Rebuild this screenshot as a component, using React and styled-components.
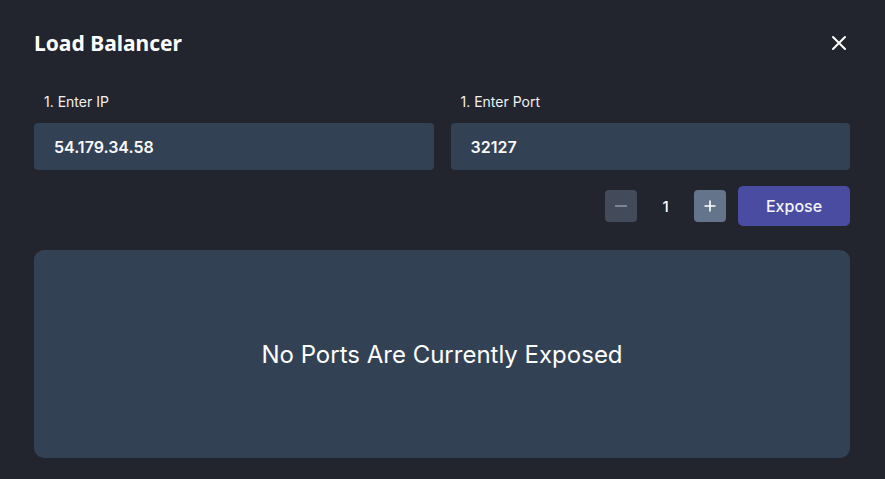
import React from 'react';
import styled, { createGlobalStyle } from 'styled-components';

const GlobalStyle = createGlobalStyle`
  html, body {
    margin: 0;
    padding: 0;
    background: #22242e;
  }
  * { box-sizing: border-box; }
`;

export default function App() {
  return (
    <>
      <GlobalStyle />
      <Modal>
        <Header>
          <Title>Load Balancer</Title>
          <CloseButton aria-label="Close">
            <svg width="16" height="16" viewBox="0 0 16 16">
              <path d="M2 2L14 14M14 2L2 14" stroke="#fff" strokeWidth="2" strokeLinecap="round" />
            </svg>
          </CloseButton>
        </Header>

        <Fields>
          <Field>
            <Label>1. Enter IP</Label>
            <Input defaultValue="54.179.34.58" />
          </Field>
          <Field>
            <Label>1. Enter Port</Label>
            <Input defaultValue="32127" />
          </Field>
        </Fields>

        <Controls>
          <StepButton $variant="minus">
            <svg width="14" height="14" viewBox="0 0 14 14">
              <path d="M1 7H13" stroke="#8a93a3" strokeWidth="1.6" />
            </svg>
          </StepButton>
          <Count>1</Count>
          <StepButton $variant="plus">
            <svg width="14" height="14" viewBox="0 0 14 14">
              <path d="M1.5 7H12.5M7 1.5V12.5" stroke="#fff" strokeWidth="1.6" />
            </svg>
          </StepButton>
          <ExposeButton>Expose</ExposeButton>
        </Controls>

        <Empty>No Ports Are Currently Exposed</Empty>
      </Modal>
    </>
  );
}

const Modal = styled.div`
  width: 885px;
  height: 479px;
  padding: 30px 35px 20px 34px;
  background: #22242e;
  font-family: Inter, "Noto Sans", sans-serif;
  color: #fff;
  display: flex;
  flex-direction: column;
`;

const Header = styled.div`
  display: flex;
  align-items: center;
  justify-content: space-between;
  height: 26px;
`;

const Title = styled.h2`
  margin: 0;
  font-family: "Noto Sans", sans-serif;
  font-size: 21px;
  font-weight: 700;
  color: #fff;
`;

const CloseButton = styled.button`
  background: none;
  border: none;
  padding: 0;
  margin-right: 3px;
  width: 16px;
  height: 16px;
  display: flex;
  cursor: pointer;
`;

const Fields = styled.div`
  display: grid;
  grid-template-columns: 1fr 1fr;
  gap: 17px;
  margin-top: 37px;
`;

const Field = styled.div`
  display: flex;
  flex-direction: column;
`;

const Label = styled.label`
  font-size: 14px;
  color: #f1f1f1;
  padding-left: 10px;
  line-height: 17px;
  margin-bottom: 13px;
`;

const Input = styled.input`
  height: 47px;
  border: none;
  outline: none;
  border-radius: 4px;
  background: #334155;
  color: #f8f8f8;
  font-family: Inter, sans-serif;
  font-size: 16px;
  font-weight: 600;
  padding: 0 20px;
`;

const Controls = styled.div`
  display: flex;
  align-items: center;
  justify-content: flex-end;
  margin-top: 16px;
  height: 40px;
`;

const StepButton = styled.button`
  width: 32px;
  height: 32px;
  border: none;
  border-radius: 4px;
  padding: 0;
  display: flex;
  align-items: center;
  justify-content: center;
  background: ${p => (p.$variant === 'plus' ? '#64748b' : '#434b5b')};
`;

const Count = styled.span`
  width: 57px;
  text-align: center;
  font-size: 15px;
  font-weight: 500;
`;

const ExposeButton = styled.button`
  margin-left: 12px;
  width: 112px;
  height: 40px;
  border: none;
  border-radius: 5px;
  background: #4a4ca2;
  color: #f4f4f8;
  font-family: Inter, sans-serif;
  font-size: 16px;
  font-weight: 500;
`;

const Empty = styled.div`
  margin-top: 24px;
  height: 208px;
  border-radius: 10px;
  background: #334155;
  display: flex;
  align-items: center;
  justify-content: center;
  font-size: 24px;
  color: #fff;
`;
